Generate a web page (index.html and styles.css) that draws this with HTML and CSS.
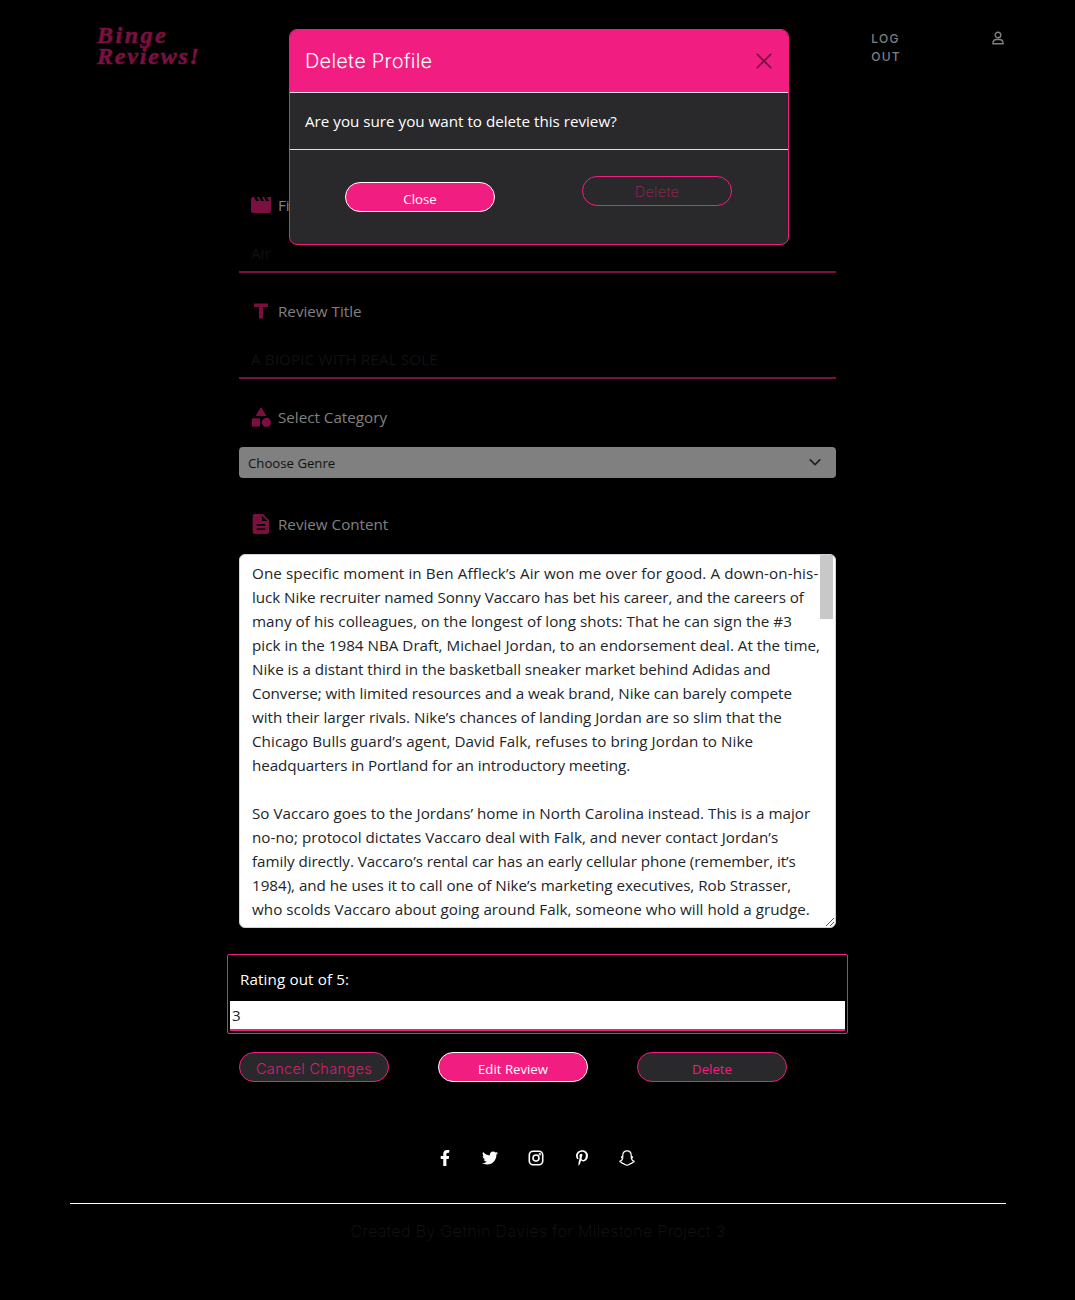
FILE: index.html
```html
<!DOCTYPE html>
<html lang="en">
<head>
<meta charset="utf-8">
<title>Binge Reviews!</title>
<link rel="stylesheet" href="styles.css">
</head>
<body>
<header class="header">
  <a class="logo"><span class="logo-top">Binge</span><span class="logo-bottom">Reviews!</span></a>
  <nav class="nav">
    <a class="logout">LOG<br>OUT</a>
    <svg class="user" viewBox="0 0 12 14" fill="none" stroke="currentColor" stroke-width="1.4"><circle cx="6" cy="4" r="2.8"/><path d="M.9 12.7c0-2.600 1.600-4.200 3.600-4.200h3c2 0 3.600 1.600 3.600 4.200z"/></svg>
  </nav>
</header>

<main class="form">
  <div class="group">
    <div class="label"><svg class="icon" viewBox="0 0 24 24"><path d="M18 4l2 4h-3l-2-4h-2l2 4h-3l-2-4H8l2 4H7L5 4H4a2 2 0 0 0-2 2v12a2 2 0 0 0 2 2h16a2 2 0 0 0 2-2V4z" transform="translate(-2.400 -2.400) scale(1.200)"/></svg><span class="label-text">Film Name</span></div>
    <div class="field"><span class="value-air">Air</span></div>
  </div>
  <div class="group">
    <div class="label"><svg class="icon" viewBox="0 0 24 24"><path d="M3.600 3v4.200h6V21h4.800V7.200h6V3z"/></svg><span class="label-text">Review Title</span></div>
    <div class="field"><span class="value-title">A BIOPIC WITH REAL SOLE</span></div>
  </div>
  <div class="group select-group">
    <div class="label"><svg class="icon" viewBox="0 0 24 24"><path d="M12 0l6.600 10.800H5.400z"/><circle cx="18.500" cy="18.500" r="5.500"/><path d="M1.200 13.500h9.600v10H1.200z"/></svg><span class="label-text">Select Category</span></div>
    <div class="select"><span class="genre">Choose Genre</span><svg class="chevron" viewBox="0 0 16 16"><path d="M2 5l6 6 6-6"/></svg></div>
  </div>
  <div class="group content-group">
    <div class="label"><svg class="icon" viewBox="0 0 24 24"><path fill-rule="evenodd" d="M4.400 0A2.400 2.400 0 0 0 2 2.400v19.200A2.400 2.400 0 0 0 4.400 24h14.800a2.400 2.400 0 0 0 2.400-2.400V7.200L14.400 0zM13 2l6.500 6.500H13zM7 12h10v2.200H7zm0 5h10v2.200H7z"/></svg><span class="label-text">Review Content</span></div>
    <div class="textarea">
      <p class="line l1">One specific moment in Ben Affleck’s Air won me over for good. A down-on-his-</p>
      <p class="line l2">luck Nike recruiter named Sonny Vaccaro has bet his career, and the careers of</p>
      <p class="line l3">many of his colleagues, on the longest of long shots: That he can sign the #3</p>
      <p class="line l4">pick in the 1984 NBA Draft, Michael Jordan, to an endorsement deal. At the time,</p>
      <p class="line l5">Nike is a distant third in the basketball sneaker market behind Adidas and</p>
      <p class="line l6">Converse; with limited resources and a weak brand, Nike can barely compete</p>
      <p class="line l7">with their larger rivals. Nike’s chances of landing Jordan are so slim that the</p>
      <p class="line l8">Chicago Bulls guard’s agent, David Falk, refuses to bring Jordan to Nike</p>
      <p class="line l9">headquarters in Portland for an introductory meeting.</p>
      <p class="line gap"></p>
      <p class="line l11">So Vaccaro goes to the Jordans’ home in North Carolina instead. This is a major</p>
      <p class="line l12">no-no; protocol dictates Vaccaro deal with Falk, and never contact Jordan’s</p>
      <p class="line l13">family directly. Vaccaro’s rental car has an early cellular phone (remember, it’s</p>
      <p class="line l14">1984), and he uses it to call one of Nike’s marketing executives, Rob Strasser,</p>
      <p class="line l15">who scolds Vaccaro about going around Falk, someone who will hold a grudge.</p>
      <span class="thumb"></span>
      <svg class="grip" viewBox="0 0 10 10"><path d="M1 9l8-8M5 9l4-4"/></svg>
    </div>
  </div>
  <div class="rating">
    <div class="rating-label">Rating out of 5:</div>
    <div class="rating-input">3</div>
  </div>
  <div class="actions">
    <button class="btn outline geo cancel">Cancel Changes</button>
    <button class="btn solid edit">Edit Review</button>
    <button class="btn outline">Delete</button>
  </div>
</main>

<footer class="footer">
  <div class="social">
    <svg viewBox="0 0 320 512" class="fb"><path d="M279.140 288l14.220-92.660h-88.910v-60.130c0-25.350 12.420-50.060 52.240-50.060h40.420V6.260S260.430 0 225.360 0c-73.220 0-121.080 44.380-121.080 124.720v70.620H22.890V288h81.390v224h100.170V288z"/></svg>
    <svg viewBox="0 0 512 512"><path d="M459.370 151.716c.325 4.548.325 9.097.325 13.645 0 138.720-105.583 298.558-298.558 298.558-59.452 0-114.680-17.219-161.137-47.106 8.447.974 16.568 1.299 25.340 1.299 49.055 0 94.213-16.568 130.274-44.832-46.132-.975-84.792-31.188-98.112-72.772 6.498.974 12.995 1.624 19.818 1.624 9.421 0 18.843-1.300 27.614-3.573-48.081-9.747-84.143-51.980-84.143-102.985v-1.299c13.969 7.797 30.214 12.670 47.431 13.319-28.264-18.843-46.781-51.005-46.781-87.391 0-19.492 5.197-37.360 14.294-52.954 51.655 63.675 129.300 105.258 216.365 109.807-1.624-7.797-2.599-15.918-2.599-24.040 0-57.828 46.782-104.934 104.934-104.934 30.213 0 57.502 12.670 76.670 33.137 23.715-4.548 46.456-13.320 66.599-25.340-7.798 24.366-24.366 44.833-46.132 57.827 21.117-2.273 41.584-8.122 60.426-16.243-14.292 20.791-32.161 39.308-52.628 54.253z"/></svg>
    <svg viewBox="0 0 16 16" fill="none" stroke="#fff" stroke-width="1.600"><rect x="1.300" y="1.300" width="13.400" height="13.400" rx="3.800"/><circle cx="8" cy="8" r="3"/><circle cx="11.800" cy="4.300" r=".4"/></svg>
    <svg viewBox="0 0 384 512"><path d="M204 6.500C101.400 6.500 0 74.900 0 185.600 0 256 39.600 296 63.600 296c9.900 0 15.600-27.600 15.600-35.400 0-9.300-23.700-29.100-23.700-67.800 0-80.400 61.200-137.400 140.400-137.400 68.100 0 118.500 38.700 118.500 109.800 0 53.100-21.300 152.700-90.300 152.700-24.900 0-46.200-18-46.200-43.800 0-37.800 26.400-74.400 26.400-113.400 0-66.200-93.900-54.200-93.900 25.800 0 16.800 2.100 35.400 9.600 50.700-13.800 59.400-42 147.900-42 209.100 0 18.900 2.700 37.500 4.500 56.400 3.400 3.800 1.700 3.400 6.900 1.500 50.400-69 48.600-82.500 71.400-172.800 12.300 23.400 44.100 36 69.300 36 106.200 0 153.900-103.500 153.900-196.800C384 71.300 298.200 6.500 204 6.500z"/></svg>
    <svg viewBox="0 0 16 16" fill="none" stroke="#fff" stroke-width="1.200" stroke-linejoin="round"><path d="M8 .8c2.500 0 4.200 1.800 4.200 4.200v2l1.300-.2c.3.700-.3 1.100-1.300 1.500.5 1.600 1.400 2.500 3 3-.2.900-1.200 1-2.100 1.200l-.3 1c-1.900-.4-2.500 1.700-4.800 1.700s-2.900-2.100-4.800-1.700l-.3-1C2 12.300 1 12.200.8 11.300c1.600-.5 2.500-1.400 3-3-1-.4-1.600-.8-1.300-1.500l1.300.2V5C3.800 2.600 5.500.8 8 .8z"/></svg>
  </div>
  <p class="credit"><span>Created By Gethin Davies for Milestone Project 3</span></p>
</footer>

<div class="modal" role="dialog">
  <div class="modal-header"><h5 class="modal-title">Delete Profile</h5><svg class="close-x" viewBox="0 0 16 16"><path d="M.8.8l14.400 14.400M15.200.8L.8 15.200"/></svg></div>
  <div class="modal-body"><span>Are you sure you want to delete this review?</span></div>
  <div class="modal-footer">
    <button class="btn solid close-btn">Close</button>
    <button class="btn outline geo delete-btn">Delete</button>
  </div>
</div>
</body>
</html>
```
FILE: styles.css
```css
* { box-sizing: border-box; }
body {
  margin: 0;
  height: 1300px;
  position: relative;
  background: #000;
  color: #fff;
  font: 15.2px/24px "Open Sans", "Noto Sans", sans-serif;
  overflow: hidden;
}
p, h5 { margin: 0; }

.header {
  height: 193px;
  padding: 25px 71px 0 97px;
  display: flex;
  justify-content: space-between;
  align-items: flex-start;
}
.logo {
  display: flex;
  flex-direction: column;
  color: #7a0f40;
  font: italic bold 24px/21px "Liberation Serif", serif;
  -webkit-text-stroke: .6px #7a0f40;
}
.logo-top { letter-spacing: 2.5px; }
.logo-bottom { letter-spacing: 1.800px; }
.nav { display: flex; gap: 91px; color: #808080; padding-top: 5px; }
.logout { font: 500 12px/18px Inter, sans-serif; letter-spacing: 1.300px; }
.user { width: 12px; height: 14px; margin-top: 1px; }

.form { width: 597px; margin: 0 auto 0 239px; }
.group { margin-bottom: 26px; }
.label { height: 24px; padding-left: 12px; display: flex; align-items: center; gap: 7px; color: #808080; }
.icon { width: 20px; height: 20px; fill: #7a0f40; }
.field {
  height: 56px;
  padding: 24px 12px 0;
  border-bottom: 2px solid #7a0f40;
  color: #101112;
}
.value-title { letter-spacing: .13px; }
.select-group { margin-bottom: 34px; }
.select {
  margin-top: 18px;
  height: 31px;
  padding: 1px 14px 0 9px;
  display: flex;
  align-items: center;
  justify-content: space-between;
  border-radius: 4px;
  background: #808080;
  color: #101112;
  font-size: 13.200px;
}
.chevron { width: 14px; height: 14px; margin-bottom: 2px; fill: none; stroke: #1a1c1e; stroke-width: 1.800; }
.textarea {
  position: relative;
  margin-top: 18px;
  height: 374px;
  padding: 6px 12px;
  border: 1px solid #ced4da;
  border-radius: 6px;
  background: #fff;
  color: #212529;
}
.line { height: 24px; white-space: nowrap; }
.l1 { letter-spacing: .1px; }
.l2 { letter-spacing: -.064px; }
.l3 { letter-spacing: .04px; }
.l4 { letter-spacing: .012px; }
.l5 { letter-spacing: -.04px; }
.l6 { letter-spacing: -.054px; }
.l8 { letter-spacing: .056px; }
.l9 { letter-spacing: -.075px; }
.l11 { letter-spacing: .025px; }
.l12 { letter-spacing: .027px; }
.l13 { letter-spacing: -.06px; }
.l14 { letter-spacing: -.025px; }
.l15 { letter-spacing: .04px; }
.thumb { position: absolute; top: 0; right: 2px; width: 13px; height: 64px; background: #c8c8c8; }
.grip { position: absolute; right: 0; bottom: 0; width: 10px; height: 10px; stroke: #444; fill: none; stroke-width: .9; }

.rating {
  margin: 0 -12px 18px;
  height: 80px;
  padding: 12px 2px 2px;
  border: 1px solid #f21d80;
  border-radius: 2px;
}
.rating-label { padding-left: 10px; height: 34px; letter-spacing: .12px; }
.rating-input {
  height: 30px;
  padding: 2px 2px 0;
  background: #fff;
  border-bottom: 2px solid #f21d80;
  color: #212529;
}
.actions { display: flex; gap: 49px; }
.btn {
  width: 150px;
  height: 30px;
  padding: 3px 0 0;
  border-radius: 15px;
  font: 500 13.200px/20px "Open Sans", sans-serif;
}
.outline { background: #29292c; border: 1px solid #f21d80; color: #f21d80; }
.solid { background: #f21d80; border: 1px solid #fff; color: #fff; }
.geo { font-family: Inter, sans-serif; font-weight: 300; font-size: 14.500px; letter-spacing: .35px; }
.cancel { color: #d81e6c; }

.footer { padding: 68px 69px 0 70px; }
.social { display: flex; justify-content: center; gap: 29.700px; height: 53px; padding-right: 4px; }
.social svg { width: 16px; height: 16px; }
.social svg:not([fill]) { fill: #fff; }
.credit {
  border-top: 1px solid #fff;
  padding-top: 15px;
  text-align: center;
  color: #151617;
  font: 200 16px/24px Inter, sans-serif;
  letter-spacing: .4px;
}

.modal {
  position: absolute;
  left: 289px;
  top: 29px;
  width: 500px;
  height: 216px;
  border: 1px solid #f21d80;
  border-radius: 8px;
  background: #29292c;
  overflow: hidden;
}
.modal-header {
  height: 63px;
  padding: 0 16px 0 15px;
  display: flex;
  align-items: center;
  justify-content: space-between;
  background: #f21d80;
  border-bottom: 1px solid #dee2e6;
}
.modal-title { font: 300 20px/30px Inter, sans-serif; letter-spacing: .22px; }
.close-x { width: 16px; height: 16px; fill: none; stroke: #7a0f40; stroke-width: 1.700; }
.modal-body { height: 57px; padding: 16px 15px; border-bottom: 1px solid #dee2e6; font-weight: 500; }
.modal-footer { display: flex; gap: 87px; padding: 26px 55px 0; }
.close-btn { margin-top: 6px; }
.delete-btn { color: #a81f60; padding: 2px 0 0; font-weight: 200; }
```
